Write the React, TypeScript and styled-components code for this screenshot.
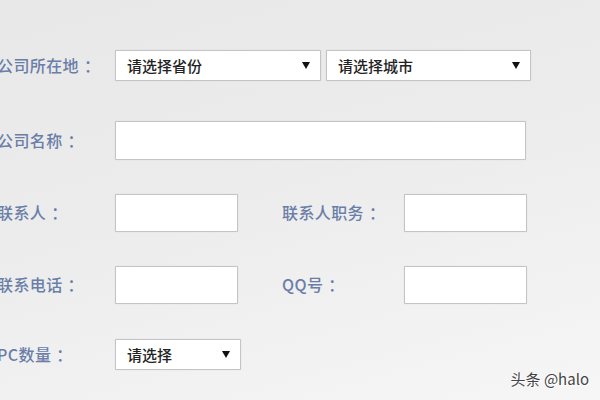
import React from "react";
import styled, { createGlobalStyle } from "styled-components";

const GlobalStyle = createGlobalStyle`
  html, body {
    margin: 0;
    padding: 0;
  }
  body {
    font-family: "Noto Sans CJK SC", "Noto Sans", sans-serif;
  }
`;

const Page = styled.div`
  position: relative;
  width: 600px;
  height: 400px;
  overflow: hidden;
  background: linear-gradient(165deg, #e8e8e8 0%, #ececec 45%, #f6f6f6 100%);
`;

const Form = styled.div`
  display: flex;
  flex-direction: column;
  margin-left: -3px;
`;

const Row = styled.div<{ $top: number }>`
  display: flex;
  align-items: center;
  margin-top: ${(p) => p.$top}px;
`;

const Label = styled.span<{ $width: number }>`
  width: ${(p) => p.$width}px;
  flex-shrink: 0;
  font-size: 16px;
  font-weight: 500;
  letter-spacing: 0.4px;
  color: #6a7ea8;
  white-space: nowrap;
  margin-top: -2px;
`;

const Colon = styled.span`
  margin-left: 5px;
`;

const Field = styled.div<{ $width: number; $height: number }>`
  box-sizing: border-box;
  width: ${(p) => p.$width}px;
  height: ${(p) => p.$height}px;
  background: #fff;
  border: 1px solid #c4c4c4;
  box-shadow: 0 0 1px rgba(0, 0, 0, 0.18);
  border-radius: 1px;
`;

const SelectBox = styled(Field)`
  display: flex;
  align-items: center;
  justify-content: space-between;
  padding: 0 10px 0 11px;
  font-size: 15px;
  font-weight: 500;
  color: #222;
`;

const Caret = styled.span`
  width: 0;
  height: 0;
  border-left: 4px solid transparent;
  border-right: 4px solid transparent;
  border-top: 7px solid #111;
`;

const Gap = styled.div<{ $w: number }>`
  width: ${(p) => p.$w}px;
  flex-shrink: 0;
`;

const Watermark = styled.div`
  position: absolute;
  right: 11px;
  bottom: 11px;
  font-size: 15px;
  color: #444;
  text-shadow: 1px 1px 0 #fff, -1px 0 0 rgba(255, 255, 255, 0.6);
`;

const FieldLabel = ({ text, width }: { text: string; width: number }) => (
  <Label $width={width}>
    {text}
    <Colon>：</Colon>
  </Label>
);

const Select = ({ text, width, height }: { text: string; width: number; height: number }) => (
  <SelectBox $width={width} $height={height}>
    <span>{text}</span>
    <Caret />
  </SelectBox>
);

const App = () => {
  return (
    <Page>
      <GlobalStyle />
      <Form>
        <Row $top={50}>
          <FieldLabel text="公司所在地" width={118} />
          <Select text="请选择省份" width={206} height={31} />
          <Gap $w={5} />
          <Select text="请选择城市" width={205} height={31} />
        </Row>
        <Row $top={40}>
          <FieldLabel text="公司名称" width={118} />
          <Field $width={411} $height={39} />
        </Row>
        <Row $top={34}>
          <FieldLabel text="联系人" width={118} />
          <Field $width={123} $height={38} />
          <Gap $w={44} />
          <FieldLabel text="联系人职务" width={122} />
          <Field $width={123} $height={38} />
        </Row>
        <Row $top={34}>
          <FieldLabel text="联系电话" width={118} />
          <Field $width={123} $height={38} />
          <Gap $w={44} />
          <FieldLabel text="QQ号" width={122} />
          <Field $width={123} $height={38} />
        </Row>
        <Row $top={35}>
          <FieldLabel text="PC数量" width={118} />
          <Select text="请选择" width={126} height={31} />
        </Row>
      </Form>
      <Watermark>头条 @halo</Watermark>
    </Page>
  );
};

export default App;
